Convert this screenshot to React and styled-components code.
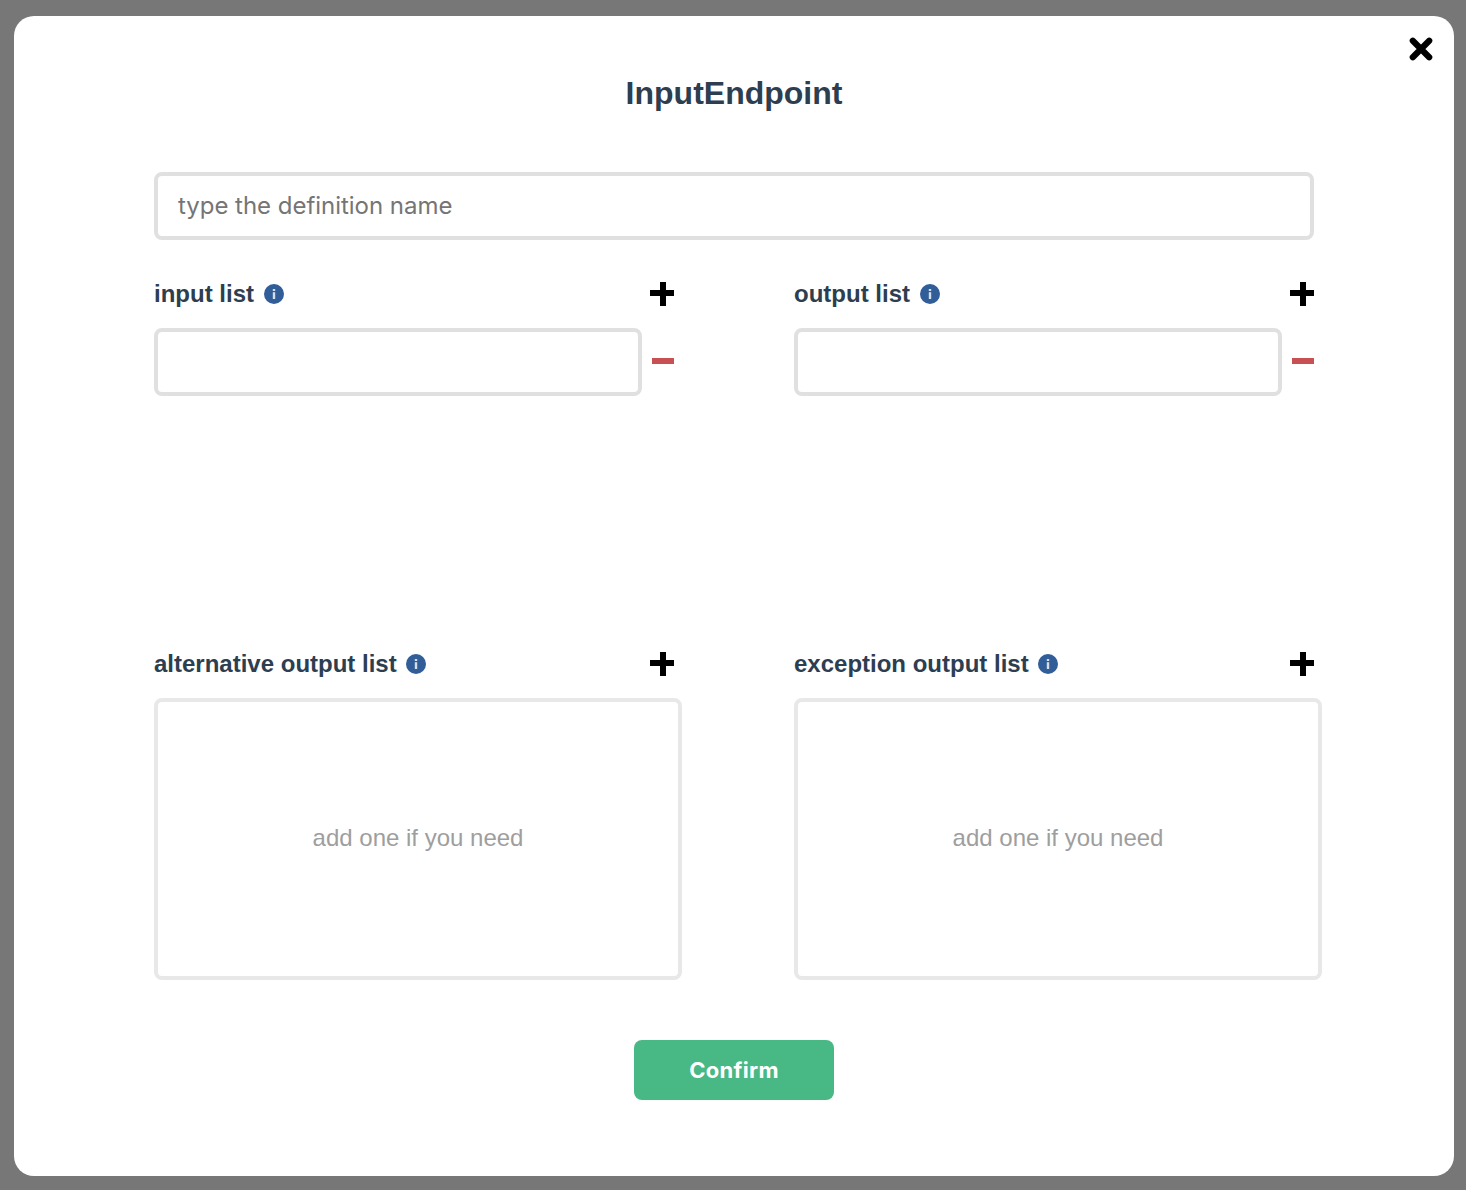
import React from "react";
import styled, { createGlobalStyle } from "styled-components";

const GlobalStyle = createGlobalStyle`
  *, *::before, *::after { box-sizing: border-box; }
  body {
    margin: 0;
    background: #777777;
    color: #2c3e50;
    font-family: "Liberation Sans", Arial, Helvetica, sans-serif;
  }
`;

const Overlay = styled.div`
  height: 1190px;
  padding: 16px 12px 14px 14px;
  background: #777777;
`;

const Modal = styled.div`
  position: relative;
  display: flex;
  flex-direction: column;
  height: 1160px;
  padding: 57px 132px 76px 140px;
  border-radius: 20px;
  background: #fff;
`;

const CloseButton = styled.button`
  position: absolute;
  top: 20px;
  right: 20px;
  width: 26px;
  height: 26px;
  padding: 0;
  border: 0;
  background: none;
  svg { display: block; }
`;

const Title = styled.h1`
  width: 1160px;
  height: 40px;
  margin: 0 0 59px;
  font-size: 32px;
  line-height: 40px;
  font-weight: 700;
  text-align: center;
`;

const TextInput = styled.input`
  display: block;
  width: ${(p) => p.$width}px;
  height: 68px;
  padding: 0 20px 2px;
  border: 4px solid #e0e0e0;
  border-radius: 8px;
  outline: none;
  background: #fff;
  font-family: Inter, sans-serif;
  font-size: 24px;
  letter-spacing: -0.03px;
  &::placeholder { color: #757575; opacity: 1; }
`;

const Lists = styled.div`
  display: grid;
  flex: none;
  grid-template-columns: 528px 528px;
  grid-template-rows: 330px 340px;
  column-gap: 112px;
  row-gap: 40px;
  margin-top: 30px;
`;

const Section = styled.section`
  display: flex;
  flex-direction: column;
`;

const SectionHeader = styled.div`
  display: flex;
  flex: none;
  align-items: center;
  height: 48px;
  margin-bottom: 10px;
  padding-right: 8px;
`;

const SectionTitle = styled.h2`
  margin: 0 9.6px 0 0;
  font-size: 24px;
  line-height: 28px;
  font-weight: 700;
`;

const AddButton = styled.button`
  margin-left: auto;
  padding: 0;
  border: 0;
  background: none;
  svg { display: block; }
`;

const Row = styled.div`
  display: flex;
  align-items: center;
  gap: 10px;
`;

const RemoveButton = styled.button`
  width: 22px;
  height: 6px;
  margin-top: -2px;
  padding: 0;
  border: 0;
  background: #c85052;
`;

const EmptyBox = styled.div`
  display: flex;
  flex: none;
  align-items: center;
  justify-content: center;
  height: 282px;
  padding-bottom: 2px;
  border: 4px solid #e8e8e8;
  border-radius: 8px;
  color: #9e9e9e;
  font-size: 24px;
`;

const ConfirmButton = styled.button`
  width: 200px;
  height: 60px;
  margin: auto 0 0 480px;
  padding: 0;
  border: 0;
  border-radius: 8px;
  background: #48b884;
  color: #fff;
  font-family: Inter, sans-serif;
  font-size: 22px;
  font-weight: 700;
  letter-spacing: 0.3px;
`;

const CloseIcon = () => (
  <svg width="26" height="26" viewBox="0 0 26 26">
    <path d="M4.8 4.8l16.4 16.4M21.2 4.8L4.8 21.2" stroke="#000" strokeWidth="6.2" strokeLinecap="round" />
  </svg>
);

const PlusIcon = () => (
  <svg width="24" height="24" viewBox="0 0 24 24" shapeRendering="crispEdges">
    <path d="M10 0h6v8h8v6h-8v10h-6V14H0V8h10z" fill="#000" />
  </svg>
);

const InfoIcon = () => (
  <svg width="20" height="20" viewBox="0 0 20 20">
    <circle cx="10" cy="10" r="10" fill="#315d99" />
    <rect x="8.8" y="5" width="2.4" height="2" fill="#d6deea" />
    <rect x="8.8" y="8.2" width="2.4" height="6.8" fill="#d6deea" />
  </svg>
);

function ListSection({ title, rows }) {
  return (
    <Section>
      <SectionHeader>
        <SectionTitle>{title}</SectionTitle>
        <InfoIcon />
        <AddButton aria-label="add"><PlusIcon /></AddButton>
      </SectionHeader>
      {rows > 0 ? (
        Array.from({ length: rows }, (_, i) => (
          <Row key={i}>
            <TextInput $width={488} />
            <RemoveButton aria-label="remove" />
          </Row>
        ))
      ) : (
        <EmptyBox>add one if you need</EmptyBox>
      )}
    </Section>
  );
}

export default function App() {
  return (
    <>
      <GlobalStyle />
      <Overlay>
        <Modal>
          <CloseButton aria-label="close"><CloseIcon /></CloseButton>
          <Title>InputEndpoint</Title>
          <TextInput $width={1160} placeholder="type the definition name" />
          <Lists>
            <ListSection title="input list" rows={1} />
            <ListSection title="output list" rows={1} />
            <ListSection title="alternative output list" rows={0} />
            <ListSection title="exception output list" rows={0} />
          </Lists>
          <ConfirmButton>Confirm</ConfirmButton>
        </Modal>
      </Overlay>
    </>
  );
}
